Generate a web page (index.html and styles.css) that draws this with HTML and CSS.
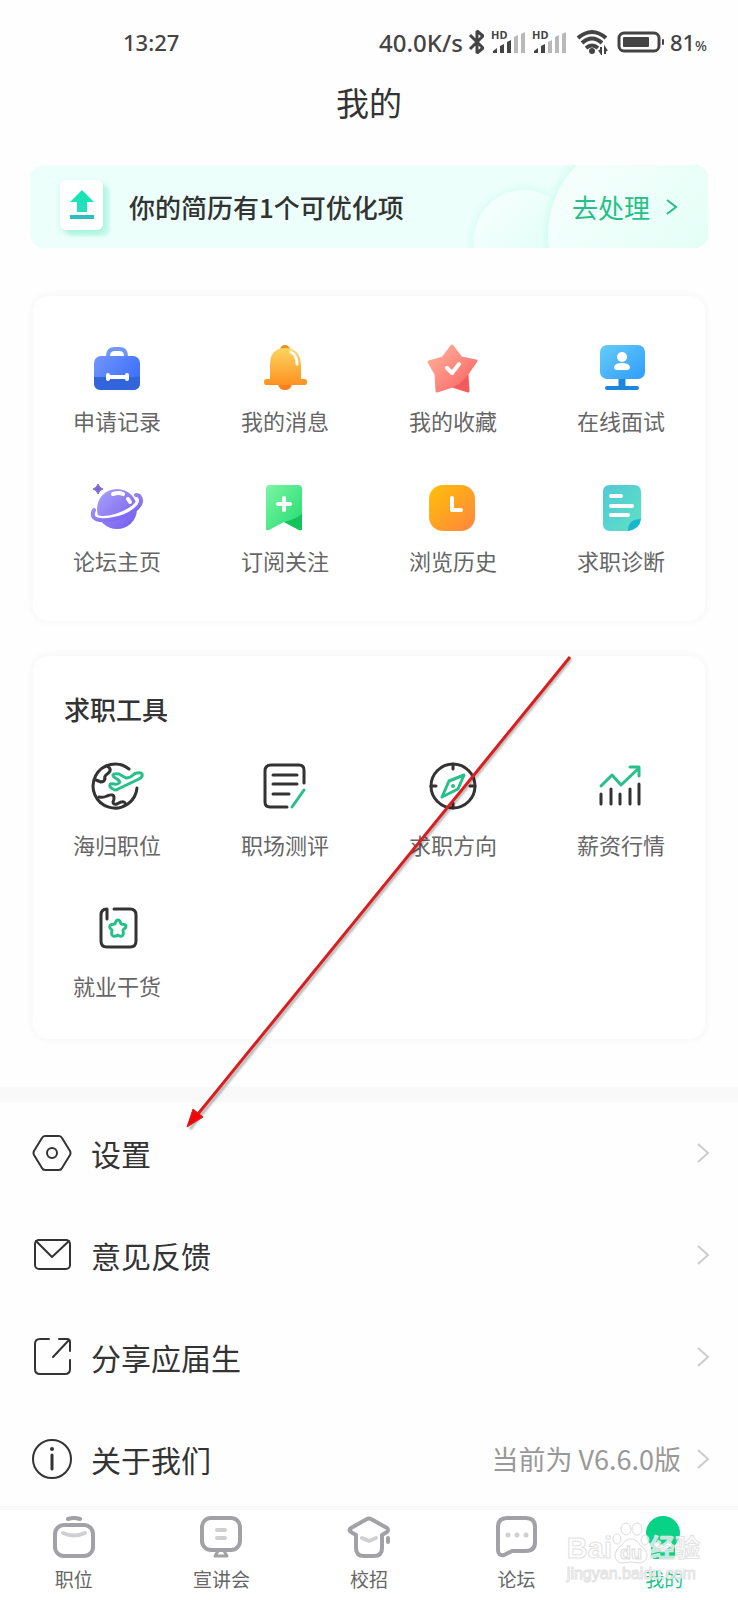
FILE: index.html
```html
<!DOCTYPE html>
<html lang="zh-CN">
<head>
    <meta charset="UTF-8">
    <meta name="viewport" content="width=device-width, initial-scale=1.0">
    <title>我的</title>
    <link rel="stylesheet" href="styles.css">
</head>
<body>

    <!-- Statusleiste -->
    <div class="status-bar">
        <span class="time">13:27</span>
        <div class="status-right">
            <span class="speed">40.0K/s</span>
            <svg class="bluetooth" width="18" height="28" viewBox="0 0 18 28" fill="none" stroke="#444" stroke-width="3" stroke-linejoin="bevel"><path d="M2 7l13 13-6 5V3l6 5L2 21"/></svg>
            <svg class="signal" width="36" height="30" viewBox="0 0 36 30">
                <text x="0" y="12" class="hd">HD</text>
                <path fill="#444" d="M2 26v-2l4-3v5zM9 26v-7l4-2v9zM16 26v-11l4-2v13z"/>
                <path fill="#b8b8b8" d="M23 26v-16l4-2v18zM30 26V7l4-2v21z"/>
            </svg>
            <svg class="signal" width="36" height="30" viewBox="0 0 36 30">
                <text x="0" y="12" class="hd">HD</text>
                <path fill="#444" d="M2 26v-2l4-3v5zM9 26v-7l4-2v9z"/>
                <path fill="#b8b8b8" d="M16 26v-11l4-2v13zM23 26v-16l4-2v18zM30 26V7l4-2v21z"/>
            </svg>
            <svg class="wifi" width="32" height="26" viewBox="0 0 32 26" fill="none" stroke="#444" stroke-width="4">
                <path d="M2 9q14-12 28 0M6 14q10-9 20 0M10 19q6-5 12 0"/>
                <circle cx="16" cy="22" r="3" fill="#444" stroke="none"/>
                <path stroke-width="2" d="M23 21l2 3v-6M29 25v-6l2 3"/>
            </svg>
            <svg class="battery" width="48" height="24" viewBox="0 0 48 24">
                <rect x="2" y="3" width="40" height="18" rx="5" fill="none" stroke="#444" stroke-width="3"/>
                <rect x="6" y="7" width="26" height="10" rx="1" fill="#444"/>
                <rect x="45" y="9" width="2" height="6" rx="1" fill="#444"/>
            </svg>
            <span class="percent">81<small>%</small></span>
        </div>
    </div>

    <header>
        <h1>我的</h1>
    </header>

    <!-- Hinweis zum Lebenslauf -->
    <a class="banner" href="#resume">
        <svg class="banner-bg" width="250" height="83" viewBox="0 0 250 83">
            <defs>
                <linearGradient id="bubble" x1="0" y1="0" x2="1" y2="1">
                    <stop offset="0" stop-color="#fafffe"/>
                    <stop offset="1" stop-color="#d8fff3"/>
                </linearGradient>
                <linearGradient id="bubble2" x1="0" y1="0" x2="1" y2="1">
                    <stop offset="0.2" stop-color="#f4fffc"/>
                    <stop offset="1" stop-color="#dafff3"/>
                </linearGradient>
                <filter id="soft" x="-20%" y="-20%" width="140%" height="140%"><feGaussianBlur stdDeviation="5"/></filter>
            </defs>
            <circle cx="66" cy="75" r="52" fill="#d5fdf1" filter="url(#soft)"/>
            <circle cx="66" cy="75" r="50" fill="url(#bubble)"/>
            <ellipse cx="185" cy="70" rx="97" ry="100" fill="#ccfbed" filter="url(#soft)"/>
            <ellipse cx="185" cy="70" rx="95" ry="98" fill="url(#bubble2)"/>
        </svg>
        <span class="banner-icon">
            <svg width="26" height="30" viewBox="0 0 26 30">
                <defs>
                    <linearGradient id="up" x1="0" y1="0" x2="0" y2="1">
                        <stop offset="0" stop-color="#14e6b4"/>
                        <stop offset="1" stop-color="#25dfbd"/>
                    </linearGradient>
                </defs>
                <path fill="url(#up)" d="M13 0l12 12h-7v10H8V12H1z"/>
                <rect x="1" y="25" width="24" height="4" fill="#2bbfc0"/>
            </svg>
        </span>
        <span class="banner-text">你的简历有1个可优化项</span>
        <span class="banner-link">去处理</span>
        <svg class="banner-arrow" width="12" height="18" viewBox="0 0 12 18" fill="none" stroke="#26bf88" stroke-width="2"><path d="M1 2l9 7-9 7"/></svg>
    </a>

    <!-- Schnellzugriff -->
    <div class="card">
        <div class="grid">
            <a href="#apply">
                <svg viewBox="0 0 56 56">
                    <defs>
                        <linearGradient id="bag" x1="0" y1="0" x2="1" y2="0.6">
                            <stop offset="0" stop-color="#7296fb"/>
                            <stop offset="1" stop-color="#3e6ffa"/>
                        </linearGradient>
                    </defs>
                    <path d="M19 18v-2q0-7 7-7h4q7 0 7 7v2" fill="none" stroke="#7097f4" stroke-width="4"/>
                    <rect x="5" y="16" width="46" height="34" rx="7" fill="url(#bag)"/>
                    <path d="M5 37h46v6q0 7-7 7H12q-7 0-7-7z" fill="#3264dc"/>
                    <path d="M19 35v4M38 35v4M19 37h19" fill="none" stroke="#fff" stroke-width="4" stroke-linecap="round"/>
                </svg>
                <span>申请记录</span>
            </a>
            <a href="#messages">
                <svg viewBox="0 0 56 56">
                    <defs>
                        <linearGradient id="bell" x1="0" y1="0" x2="0" y2="1">
                            <stop offset="0" stop-color="#fbd560"/>
                            <stop offset="1" stop-color="#ff9121"/>
                        </linearGradient>
                    </defs>
                    <circle cx="28" cy="10" r="5" fill="#f08c24"/>
                    <path d="M21 44h14q-1 6-7 6t-7-6z" fill="#f8801d"/>
                    <path d="M13 39V25q0-17 15-17t16 17v14h4q2 0 2 3t-2 3H9q-2 0-2-3t2-3z" fill="url(#bell)"/>
                    <path d="M34 12q6 3 6 12" fill="none" stroke="#fff" stroke-width="3" stroke-linecap="round"/>
                </svg>
                <span>我的消息</span>
            </a>
            <a href="#favorites">
                <svg viewBox="0 0 56 56">
                    <defs>
                        <linearGradient id="star" x1="0" y1="0" x2="1" y2="1">
                            <stop offset="0" stop-color="#ffb59d"/>
                            <stop offset="1" stop-color="#fa6061"/>
                        </linearGradient>
                    </defs>
                    <path d="M27 6l9 12 15 3-9 13 1 17-16-5-15 5-1-17L4 22l14-4z" fill="url(#star)" stroke="url(#star)" stroke-width="3" stroke-linejoin="round"/>
                    <path d="M43 35l1 17-16-5q8-3 15-12z" fill="#f35a5c"/>
                    <path d="M22 28l5 5 7-9" fill="none" stroke="#fff" stroke-width="4" stroke-linecap="round" stroke-linejoin="round"/>
                </svg>
                <span>我的收藏</span>
            </a>
            <a href="#interview">
                <svg viewBox="0 0 56 56">
                    <defs>
                        <linearGradient id="screen" x1="0" y1="0" x2="1" y2="1">
                            <stop offset="0" stop-color="#66cdf9"/>
                            <stop offset="1" stop-color="#2f9cfb"/>
                        </linearGradient>
                    </defs>
                    <path d="M14 48h30" fill="none" stroke="#1c86dd" stroke-width="4" stroke-linecap="round"/>
                    <path d="M29 38v9" stroke="#1c86dd" stroke-width="7"/>
                    <rect x="7" y="5" width="45" height="34" rx="7" fill="url(#screen)"/>
                    <circle cx="29" cy="17" r="5" fill="#fff"/>
                    <path d="M21 27q1-4 8-4t8 4q0 3-3 3H24q-3 0-3-3z" fill="#fff"/>
                </svg>
                <span>在线面试</span>
            </a>
            <a href="#forum">
                <svg viewBox="0 0 56 56">
                    <defs>
                        <linearGradient id="planet" x1="0" y1="0" x2="1" y2="1">
                            <stop offset="0" stop-color="#a9a4f8"/>
                            <stop offset="1" stop-color="#7457f0"/>
                        </linearGradient>
                    </defs>
                    <circle cx="28" cy="29" r="20" fill="url(#planet)"/>
                    <path d="M4 34c5 10 40 0 46-14" fill="none" stroke="#fff" stroke-width="4"/>
                    <path d="M5 30c-5 10 6 12 20 9C40 36 56 26 51 17q-1-2-4-2" fill="none" stroke="url(#planet)" stroke-width="4" stroke-linecap="round"/>
                    <path d="M4 9q4-1 5-5 1 4 5 5-4 1-5 5-1-4-5-5z" fill="#7c66dc" stroke="#7c66dc"/>
                    <path d="M24 14q6-2 10 0M39 19l2 3" fill="none" stroke="#fff" stroke-width="4" stroke-linecap="round"/>
                </svg>
                <span>论坛主页</span>
            </a>
            <a href="#subscribe">
                <svg viewBox="0 0 56 56">
                    <defs>
                        <linearGradient id="mark" x1="0" y1="0" x2="1" y2="1">
                            <stop offset="0" stop-color="#7cf5a5"/>
                            <stop offset="1" stop-color="#20dc6f"/>
                        </linearGradient>
                    </defs>
                    <path d="M9 9q0-4 4-4h28q4 0 4 4v40q0 2-3 1L27 42 12 50q-3 1-3-1z" fill="url(#mark)"/>
                    <path d="M45 34v15q0 2-3 1L27 42q10-2 18-8z" fill="#14c25b"/>
                    <path d="M27 18v12M21 24h12" fill="none" stroke="#fff" stroke-width="4" stroke-linecap="round"/>
                </svg>
                <span>订阅关注</span>
            </a>
            <a href="#history">
                <svg viewBox="0 0 56 56">
                    <defs>
                        <linearGradient id="clock" x1="0" y1="0" x2="1" y2="1">
                            <stop offset="0.1" stop-color="#ffba0c"/>
                            <stop offset="1" stop-color="#ff8540"/>
                        </linearGradient>
                    </defs>
                    <rect x="4" y="5" width="46" height="46" rx="14" fill="url(#clock)"/>
                    <path d="M27 18v12h9" fill="none" stroke="#fff" stroke-width="4" stroke-linecap="round" stroke-linejoin="round"/>
                </svg>
                <span>浏览历史</span>
            </a>
            <a href="#diagnosis">
                <svg viewBox="0 0 56 56">
                    <defs>
                        <linearGradient id="doc" x1="0" y1="0" x2="1" y2="1">
                            <stop offset="0" stop-color="#51c9d6"/>
                            <stop offset="1" stop-color="#5fe0c4"/>
                        </linearGradient>
                    </defs>
                    <path d="M10 12q0-7 7-7h24q7 0 7 7v27q-3 9-13 12H17q-7 0-7-7z" fill="url(#doc)"/>
                    <path d="M48 39q-1 10-13 12 0-12 13-12z" fill="#17b8cf"/>
                    <path d="M18 16h10M18 26h21M18 35h17" fill="none" stroke="#fff" stroke-width="4" stroke-linecap="round"/>
                </svg>
                <span>求职诊断</span>
            </a>
        </div>
    </div>

    <!-- Werkzeuge zur Jobsuche -->
    <div class="card tools">
        <h2>求职工具</h2>
        <div class="grid">
            <a href="#overseas">
                <svg class="line" viewBox="0 0 56 56">
                    <path d="M40 11A22 22 0 1 0 48 30"/>
                    <path d="M18 8q4 2 3 5-1 2-4 4-2 2-1 4-1 3-4 3l-5-2M10 39q4 1 8-1 7-3 7 2 0 2-1 4 0 3 4 2 5-3 7-2 2 1 1 3"/>
                    <path class="green" d="M48 15q-2 0-4 2-3 3-7 3l-7-4q-5-1-6 1 0 2 4 4 4 3 2 4-2 2-5 1-4-1-4 1-1 2 3 4 2 2 5 0l21-10q4-2 3-5-1-2-5-1z"/>
                </svg>
                <span>海归职位</span>
            </a>
            <a href="#assessment">
                <svg class="line" viewBox="0 0 56 56">
                    <path d="M47 25V12q0-5-5-5H14q-6 0-6 6v31q0 5 5 5h17M16 17h24M16 26h24M16 36h16"/>
                    <path class="green" d="M47 32L35 49"/>
                </svg>
                <span>职场测评</span>
            </a>
            <a href="#direction">
                <svg class="line" viewBox="0 0 56 56">
                    <circle cx="28" cy="28" r="22"/>
                    <path d="M28 6v5M28 45v5M6 28h5M45 28h5"/>
                    <path class="green" d="M39 17l-6 14-16 8 7-16z"/>
                    <circle cx="28" cy="28" r="2" fill="#27c08a" stroke="none"/>
                </svg>
                <span>求职方向</span>
            </a>
            <a href="#salary">
                <svg class="line" viewBox="0 0 56 56">
                    <path d="M8 36v10M18 31v15M27 36v10M37 31v15M46 26v20"/>
                    <path class="green" d="M8 28l11-11 9 10L46 10M37 9h9v9"/>
                </svg>
                <span>薪资行情</span>
            </a>
            <a href="#tips">
                <svg class="line" viewBox="0 0 56 56">
                    <path d="M18 20V10q-6 0-6 6v26q0 6 6 6h23q6 0 6-6V16q0-6-6-6H25"/>
                    <path class="green" d="M29 21q2 0 3 4 5 0 5 2 0 2-3 4 1 5-1 6-2 1-4-1-3 2-5 1-2-1-1-6-3-2-2-4 0-2 5-2 1-4 3-4z"/>
                </svg>
                <span>就业干货</span>
            </a>
        </div>
    </div>

    <!-- Menü -->
    <div class="menu">
        <a href="#settings">
            <svg class="menu-icon" viewBox="0 0 40 40">
                <path d="M13 3h14q2 0 3 2l8 13q1 2 0 4l-8 13q-1 2-3 2H13q-2 0-3-2L2 22q-1-2 0-4l8-13q1-2 3-2z"/>
                <circle cx="20" cy="20" r="5"/>
            </svg>
            <span class="menu-label">设置</span>
            <svg class="chevron" viewBox="0 0 14 20"><path d="M2 1l10 9-10 9"/></svg>
        </a>
        <a href="#feedback">
            <svg class="menu-icon" viewBox="0 0 40 40">
                <rect x="3" y="5" width="35" height="29" rx="4"/>
                <path d="M4 6l16 16L37 6"/>
            </svg>
            <span class="menu-label">意见反馈</span>
            <svg class="chevron" viewBox="0 0 14 20"><path d="M2 1l10 9-10 9"/></svg>
        </a>
        <a href="#share">
            <svg class="menu-icon" viewBox="0 0 40 40">
                <path d="M17 2H8Q3 2 3 7v25q0 5 5 5h25q5 0 5-5v-9M27 2h8q3 0 3 3v9M37 3L21 20"/>
            </svg>
            <span class="menu-label">分享应届生</span>
            <svg class="chevron" viewBox="0 0 14 20"><path d="M2 1l10 9-10 9"/></svg>
        </a>
        <a href="#about">
            <svg class="menu-icon" viewBox="0 0 40 40">
                <circle cx="20" cy="20" r="19"/>
                <path d="M20 16v14" stroke-width="3"/>
                <circle cx="20" cy="10" r="2" fill="#333" stroke="none"/>
            </svg>
            <span class="menu-label">关于我们</span>
            <span class="version">当前为 V6.6.0版</span>
            <svg class="chevron" viewBox="0 0 14 20"><path d="M2 1l10 9-10 9"/></svg>
        </a>
    </div>

    <!-- Untere Navigation -->
    <nav class="tab-bar">
        <a href="#jobs">
            <svg viewBox="0 0 44 44">
                <path class="pale" d="M11 18q11 5 22 0"/>
                <rect x="3" y="10" width="38" height="31" rx="9"/>
                <path d="M16 4q6-2 12 0"/>
            </svg>
            <span>职位</span>
        </a>
        <a href="#talks">
            <svg viewBox="0 0 44 44">
                <path class="pale" d="M18 15h8M18 23h8"/>
                <rect x="3" y="3" width="38" height="32" rx="9"/>
                <path stroke-width="3" d="M19 36l-3 5h12l-3-5"/>
            </svg>
            <span>宣讲会</span>
        </a>
        <a href="#campus">
            <svg viewBox="0 0 44 44">
                <path class="pale" d="M15 23l7 3 7-3"/>
                <path d="M20 4q2-1 4 0l16 9q2 2 0 4l-5 3v13q0 8-8 8H17q-8 0-8-8V20l-5-3q-3-2 0-4zM41 23v4"/>
            </svg>
            <span>校招</span>
        </a>
        <a href="#bbs">
            <svg viewBox="0 0 44 44">
                <path d="M12 3h19q9 0 9 9v15q0 9-9 9H17l-8 4q-6 1-6-5V12q0-9 9-9z"/>
                <path class="pale dots" d="M13 20h0M22 20h0M31 20h0"/>
            </svg>
            <span>论坛</span>
        </a>
        <a class="active" href="#me">
            <svg viewBox="0 0 44 44">
                <circle class="fill" cx="21" cy="18" r="17"/>
                <path class="fill" d="M9 30h24v10q0 4-4 4H13q-4 0-4-4z"/>
                <path class="smile" d="M14 29l7 5 7-5"/>
            </svg>
            <span>我的</span>
        </a>
        <div class="watermark">
            <div class="watermark-logo">
                <span>Bai</span>
                <svg width="38" height="42" viewBox="0 0 38 42">
                    <ellipse cx="5" cy="17" rx="4" ry="5"/>
                    <ellipse cx="14" cy="7" rx="5" ry="6"/>
                    <ellipse cx="25" cy="7" rx="5" ry="6"/>
                    <ellipse cx="33" cy="18" rx="4" ry="5"/>
                    <path d="M19 17q6 0 9 6 7 5 7 10 0 7-7 8-9-2-18 0-7-1-7-8 0-5 7-10 3-6 9-6z"/>
                    <text x="19" y="37" text-anchor="middle">du</text>
                </svg>
                <span>经验</span>
            </div>
            <div class="watermark-url">jingyan.baidu.com</div>
        </div>
    </nav>

    <!-- Roter Pfeil auf "设置" -->
    <svg class="pointer" width="400" height="490" viewBox="0 0 400 490">
        <path class="shadow" d="M390 11L20 467l-11 14"/>
        <path class="shaft" d="M389 9L17 466"/>
        <path class="head" d="M6 479l6-18 10 8z"/>
    </svg>

</body>
</html>
```

FILE: styles.css
```css
* {
    box-sizing: border-box;
}

body {
    font-family: "Noto Sans CJK SC", "Noto Sans", sans-serif;
    background-color: #fefefe;
    color: #333;
    margin: 0;
    padding: 0;
    position: relative;
}

a {
    color: inherit;
    text-decoration: none;
}

svg {
    display: block;
    flex-shrink: 0;
}

.status-bar {
    display: flex;
    justify-content: space-between;
    align-items: center;
    height: 84px;
    padding: 0 31px 0 123px;
    font-family: "Noto Sans", sans-serif;
    font-weight: 500;
    color: #444;
}

.time {
    font-size: 22px;
}

.speed {
    font-size: 24px;
}

.percent {
    font-size: 22px;
    margin-left: 5px;
}

.percent small {
    font-size: 14px;
}

.status-right {
    display: flex;
    align-items: center;
}

.bluetooth {
    margin-left: 5px;
}

.signal {
    margin-left: 5px;
    overflow: visible;
}

.wifi {
    margin-left: 8px;
}

.battery {
    margin-left: 9px;
}

.hd {
    font-size: 11px;
    font-weight: bold;
    fill: #444;
}

header {
    text-align: center;
    height: 81px;
}

h1 {
    margin: 0;
    font-size: 33px;
    line-height: 36px;
    font-weight: 400;
}

.banner {
    position: relative;
    display: flex;
    align-items: center;
    height: 83px;
    margin: 0 30px 48px;
    padding: 0 30px;
    border-radius: 14px;
    background-color: #edfffb;
    overflow: hidden;
}

.banner-bg {
    position: absolute;
    right: 0;
    top: 0;
}

.banner-icon {
    display: flex;
    align-items: center;
    justify-content: center;
    width: 43px;
    height: 50px;
    margin: 0 26px 4px 0;
    border-radius: 6px;
    background-color: white;
    box-shadow: 2px 3px 6px #a5f1da, 7px 6px 2px #cffbee;
}

.banner-text {
    flex: 1;
    font-size: 26px;
    line-height: 36px;
    font-weight: 500;
}

.banner-link {
    position: relative;
    font-size: 26px;
    line-height: 36px;
    color: #26bf88;
}

.banner-arrow {
    position: relative;
    margin-left: 16px;
}

.card {
    margin: 0 33px 35px;
    padding: 44px 0 46px;
    border-radius: 16px;
    background-color: white;
    box-shadow: 0 0 6px 2px #f7f7f7;
}

.grid {
    display: grid;
    grid-template-columns: repeat(4, 1fr);
    row-gap: 45px;
}

.grid a {
    display: flex;
    flex-direction: column;
    align-items: center;
    gap: 9px;
    font-size: 22px;
    line-height: 30px;
    color: #666;
}

.grid svg {
    width: 56px;
    height: 56px;
}

.tools {
    margin-bottom: 48px;
    padding: 35px 0 39px;
}

.tools h2 {
    margin: 0 0 31px;
    padding-left: 31px;
    font-size: 26px;
    line-height: 36px;
    font-weight: 500;
}

.tools .grid {
    row-gap: 40px;
}

.tools .grid a {
    gap: 15px;
}

.line {
    fill: none;
    stroke: #333;
    stroke-width: 3;
    stroke-linecap: round;
    stroke-linejoin: round;
}

.line .green {
    stroke: #27c08a;
}

.menu {
    border-top: 15px solid #f9f9f9;
}

.menu a {
    display: flex;
    align-items: center;
    height: 102px;
    padding: 0 28px 0 32px;
}

.menu-icon {
    width: 40px;
    height: 40px;
    margin-right: 19px;
    fill: none;
    stroke: #333;
    stroke-width: 2;
    stroke-linecap: round;
    stroke-linejoin: round;
}

.menu-label {
    flex: 1;
    font-size: 30px;
    line-height: 40px;
}

.version {
    font-size: 27px;
    line-height: 40px;
    color: #999;
}

.chevron {
    width: 14px;
    height: 20px;
    margin-left: 15px;
    fill: none;
    stroke: #ccc;
    stroke-width: 2;
}

.tab-bar {
    position: relative;
    display: grid;
    grid-template-columns: repeat(5, 1fr);
    height: 90px;
    padding-top: 5px;
    background-color: white;
    box-shadow: 0 -4px 0 #f9f9f9;
}

.tab-bar a {
    display: flex;
    flex-direction: column;
    align-items: center;
    gap: 8px;
    font-size: 19px;
    line-height: 24px;
    color: #666;
}

.tab-bar a svg {
    width: 44px;
    height: 44px;
    fill: none;
    stroke: #a2a2a6;
    stroke-width: 4;
    stroke-linecap: round;
    stroke-linejoin: round;
}

.tab-bar .pale {
    stroke: #d0d0d2;
}

.tab-bar .dots {
    stroke-width: 5;
}

.tab-bar .fill {
    fill: #07d286;
    stroke: none;
}

.tab-bar .smile {
    stroke: white;
}

.tab-bar .active {
    color: #18c48b;
}

.watermark {
    position: absolute;
    right: 38px;
    top: 12px;
    font-family: "Liberation Sans", "Noto Sans CJK SC", sans-serif;
    color: rgba(255, 255, 255, 0.7);
    -webkit-text-stroke: 1px #e2e2e2;
    pointer-events: none;
}

.watermark-logo {
    display: flex;
    align-items: flex-end;
    font-size: 29px;
    line-height: 32px;
    font-weight: bold;
}

.watermark-logo span:last-child {
    font-size: 25px;
}

.watermark svg {
    fill: rgba(255, 255, 255, 0.7);
    stroke: #dcdcdc;
}

.watermark text {
    font-size: 18px;
}

.watermark-url {
    font-size: 16px;
    line-height: 20px;
}

.pointer {
    position: absolute;
    left: 181px;
    top: 648px;
    pointer-events: none;
}

.pointer .shadow {
    fill: none;
    stroke: rgba(0, 0, 0, 0.3);
    stroke-width: 3;
    filter: blur(1px);
}

.pointer .shaft {
    stroke: #d81e1e;
    stroke-width: 3;
}

.pointer .head {
    fill: #f00808;
    stroke: #d81e1e;
}
```
